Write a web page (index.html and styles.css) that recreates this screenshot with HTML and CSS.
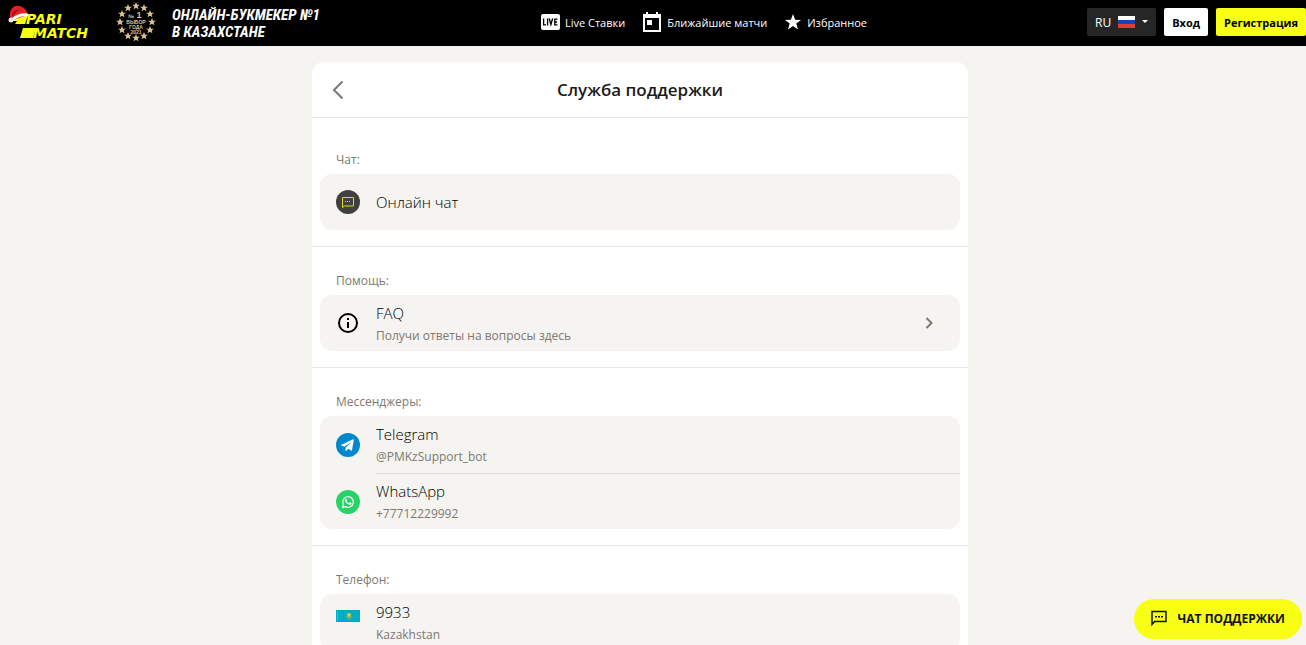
FILE: index.html
```html
<!DOCTYPE html>
<html lang="ru">
<head>
<meta charset="utf-8">
<meta name="viewport" content="width=device-width, initial-scale=1">
<title>Служба поддержки</title>
<link rel="stylesheet" href="styles.css">
</head>
<body>
<div class="page">
  <header class="topbar">
    <div class="brand">
      <a class="logo" href="#" aria-label="Parimatch">
        <svg class="logo-svg" width="82" height="34" viewBox="0 0 82 34">
          <path fill="#f8ff13" d="M5 10h15l-3 9H7l2-3H1z"/>
          <path fill="#f8ff13" d="M15 23h13l-3 10H12z"/>
          <text class="logo-text" x="18" y="19">PARI</text>
          <text class="logo-text" x="25" y="33">MATCH</text>
          <path fill="#e3212b" d="M2 13C1 5 5 0 11 1c5 1 8 4 9 9L5 15z"/>
          <path fill="#a90f1a" d="M4 9c2-4 5-5 8-4-4 1-6 4-7 9z"/>
          <path stroke="#fff" stroke-width="3" stroke-linecap="round" fill="none" d="M5 14c4-3 9-5 14-4"/>
          <circle cx="3" cy="15" r="2.500" fill="#e9e9e9"/>
        </svg>
      </a>
      <svg class="award" width="40" height="40" viewBox="0 0 40 40">
        <defs><path id="st" d="M0-4 1.100-1.300 3.900-1.200 1.700.6 2.400 3.300 0 1.800-2.400 3.300-1.700.6-3.900-1.200-1.100-1.300z"/></defs>
        <g fill="#dcc190">
          <use href="#st" x="20" y="4"/><use href="#st" x="28" y="6"/><use href="#st" x="34" y="12"/><use href="#st" x="36" y="20"/>
          <use href="#st" x="34" y="28"/><use href="#st" x="28" y="34"/><use href="#st" x="20" y="36"/><use href="#st" x="12" y="34"/>
          <use href="#st" x="6" y="28"/><use href="#st" x="4" y="20"/><use href="#st" x="6" y="12"/><use href="#st" x="12" y="6"/>
          <text class="aw aw-s" x="15" y="16">№</text>
          <text class="aw aw-l" x="23" y="16">1</text>
          <text class="aw aw-s" x="20" y="22">ВЫБОР</text>
          <text class="aw aw-s" x="20" y="27">ГОДА</text>
          <text class="aw aw-s" x="20" y="32">2021</text>
        </g>
      </svg>
      <p class="slogan">ОНЛАЙН-БУКМЕКЕР №1<br>В КАЗАХСТАНЕ</p>
    </div>
    <nav class="nav">
      <a class="nav-link" href="#">
        <svg width="20" height="16" viewBox="0 0 20 16"><rect x="1" width="19" height="16" rx="2" fill="#fff"/><path fill="none" stroke="#000" stroke-width="1.300" d="M3.600 4.500v6.300H6M7.600 4.500v7M9.200 4.500l1.700 6 1.700-6M17.500 5.100h-2.700v5.800h2.700M14.800 8h2.300"/></svg>
        Live Ставки</a>
      <a class="nav-link" href="#">
        <svg width="20" height="20" viewBox="0 0 20 20"><path fill="#fff" fill-rule="evenodd" d="M1 2h3V0h2v2h8V0h2v2h3v18H1zM3 6v12h14V6zM5 8h5v5H5z"/></svg>
        Ближайшие матчи</a>
      <a class="nav-link" href="#">
        <svg width="18" height="20" viewBox="0 0 18 20"><path fill="#fff" d="M9 2l2.100 5.700 5.900.2-4.700 3.700L14 17.500 9 14.100l-5 3.400 1.700-5.900L1 7.900l5.900-.2z"/></svg>
        Избранное</a>
    </nav>
    <div class="actions">
      <button class="btn btn-lang" type="button">RU
        <svg class="flag-ru" width="17" height="12" viewBox="0 0 17 12"><path fill="#fff" d="M0 0h17v4H0z"/><path fill="#1348b4" d="M0 4h17v4H0z"/><path fill="#e23b35" d="M0 8h17v4H0z"/></svg>
        <svg width="6" height="4" viewBox="0 0 6 4"><path fill="#fff" d="M0 0h6L3 3z"/></svg>
      </button>
      <button class="btn btn-login" type="button">Вход</button>
      <button class="btn btn-register" type="button">Регистрация</button>
    </div>
  </header>

  <main class="main">
    <div class="card">
      <div class="card-head">
        <button class="back" type="button" aria-label="Назад"><svg width="12" height="20" viewBox="0 0 12 20"><path d="M10.500 1.500 2 10l8.500 8.500" fill="none" stroke="#7d7870" stroke-width="2"/></svg></button>
        <h1 class="title">Служба поддержки</h1>
      </div>
      <section class="section section-first">
        <h2 class="label">Чат:</h2>
        <div class="group">
          <a class="row" href="#">
            <svg class="icon" viewBox="0 0 24 24"><circle cx="12" cy="12" r="12" fill="#404040"/><path fill="none" stroke="#d9e00f" d="M6.500 7.500h11v8.500H8.500l-2 1.500z"/><path stroke="#d9e00f" stroke-dasharray="1 1" d="M9 11.500h6"/></svg>
            <span class="text"><span class="name">Онлайн чат</span></span>
          </a>
        </div>
      </section>
      <section class="section">
        <h2 class="label">Помощь:</h2>
        <div class="group">
          <a class="row" href="#">
            <svg class="icon" viewBox="0 0 24 24"><circle cx="12" cy="12" r="9" fill="none" stroke="#000" stroke-width="2"/><path fill="#000" d="M11 7h2v2h-2zM11 11h2v6h-2z"/></svg>
            <span class="text"><span class="name">FAQ</span><span class="sub">Получи ответы на вопросы здесь</span></span>
            <svg class="chevron" width="8" height="12" viewBox="0 0 8 12"><path d="M1.500 1 6.500 6l-5 5" fill="none" stroke="#7d7870" stroke-width="2"/></svg>
          </a>
        </div>
      </section>
      <section class="section">
        <h2 class="label">Мессенджеры:</h2>
        <div class="group">
          <a class="row" href="#">
            <svg class="icon" viewBox="0 0 24 24"><circle cx="12" cy="12" r="12" fill="#0088cc"/><path fill="#fff" d="M17.800 6.700 16 17.200c-.1.500-.5.600-.9.400l-2.900-1.900-1.900 2.200c-.4.400-.7.200-.7-.3v-2.900l6.200-6-7.500 5-2.900-1.100c-.5-.2-.5-.6 0-.8l11.700-5.500c.5-.2.800 0 .7.400z"/></svg>
            <span class="text"><span class="name">Telegram</span><span class="sub">@PMKzSupport_bot</span></span>
          </a>
          <a class="row" href="#">
            <svg class="icon" viewBox="0 0 24 24"><circle cx="12" cy="12" r="12" fill="#25d366"/><path fill="none" stroke="#fff" stroke-width="1.200" d="M6.600 17.400l.8-2.900a5.300 5.300 0 1 1 2.100 2.100z"/><path fill="#fff" d="M9.700 8.900c.4-.3.800-.2 1 .2l.5 1.100c.1.300-.3.700-.5 1 .6 1 1.300 1.600 2.300 2l.7-.8c.2-.2.400-.2.600-.1l1.200.6c.3.200.2.700 0 1-.6.900-1.600 1-2.600.6-1.700-.6-2.900-1.700-3.700-3.200-.5-1-.3-1.900.5-2.400z"/></svg>
            <span class="text"><span class="name">WhatsApp</span><span class="sub">+77712229992</span></span>
          </a>
        </div>
      </section>
      <section class="section">
        <h2 class="label">Телефон:</h2>
        <div class="group">
          <a class="row" href="#">
            <svg class="icon icon-flag" viewBox="0 0 24 12"><path fill="#00abc8" d="M0 0h24v12H0z"/><path fill="#5eb97b" d="M1 1h1v10H1z"/><circle cx="13" cy="5" r="2" fill="#f1c21b"/><path fill="none" stroke="#8eb65a" d="M9.500 6c1 1.500 2.200 2 3.500 2s2.500-.5 3.500-2M11 9.500l2-1 2 1"/></svg>
            <span class="text"><span class="name">9933</span><span class="sub">Kazakhstan</span></span>
          </a>
        </div>
      </section>
    </div>
  </main>

  <button class="chat" type="button">
    <svg width="16" height="16" viewBox="0 0 16 16"><path fill="none" stroke="#111" stroke-width="1.500" d="M1 14.500V1.500h14v10H3.500z"/><path fill="#111" d="M4 6h2v1.500H4zM7 6h2v1.500H7zM10 6h2v1.500h-2z"/></svg>
    ЧАТ ПОДДЕРЖКИ</button>
</div>
</body>
</html>
```
FILE: styles.css
```css
* { box-sizing: border-box; }
body {
  margin: 0;
  background: #f5f4f0;
  color: #1c1b19;
  font-family: "Open Sans", "Noto Sans", sans-serif;
}
a { color: inherit; text-decoration: none; }
button { font: inherit; border: 0; padding: 0; cursor: pointer; }
svg { flex: none; display: block; }

.page { display: flex; flex-direction: column; height: 100vh; overflow: hidden; }

.topbar {
  flex: none;
  display: flex;
  align-items: center;
  justify-content: space-between;
  height: 46px;
  padding-bottom: 2px;
  background: #000;
  color: #fff;
  font-size: 11px;
}
.brand { display: flex; align-items: center; padding-left: 8px; }
.logo-svg { overflow: visible; }
.logo-text { font: italic 700 14px "DejaVu Sans", sans-serif; fill: #f8ff13; }
.award { margin: 0 16px 0 26px; }
.aw { font-family: "Liberation Sans", sans-serif; font-weight: 700; text-anchor: middle; }
.aw-s { font-size: 5px; }
.aw-l { font-size: 9px; }
.slogan {
  margin: 0;
  padding-top: 4px;
  font: italic 700 15px/17px "Roboto Condensed", "Roboto", sans-serif;
  white-space: nowrap;
}

.nav { display: flex; gap: 17px; }
.nav-link { display: flex; align-items: center; gap: 5px; white-space: nowrap; }

.actions { display: flex; gap: 8px; }
.btn { height: 28px; padding: 0 8px; border-radius: 2px; color: #000; font-weight: 700; white-space: nowrap; }
.btn-lang { display: flex; align-items: center; gap: 7px; background: #262626; color: #fff; font-size: 12px; font-weight: 400; }
.btn-login { background: #fff; }
.btn-register { background: #f8ff13; }

.main { flex: 1; min-height: 0; overflow-y: auto; scrollbar-width: none; padding: 16px 26px 16px 0; }
.card { max-width: 656px; margin: 0 auto; background: #fff; border-radius: 12px; }
.card-head {
  display: grid;
  grid-template-columns: 20px 1fr 20px;
  align-items: center;
  height: 56px;
  padding: 0 20px;
  border-bottom: 1px solid #e6e6e6;
}
.back { background: none; }
.title { margin: 0; font-size: 17px; font-weight: 600; text-align: center; }

.section { padding: 26px 8px 16px; border-bottom: 1px solid #e6e6e6; }
.section-first { padding-top: 34px; }
.section:last-child { border-bottom: 0; }
.label { margin: 0 0 6px; padding-left: 16px; font-size: 12px; line-height: 16px; font-weight: 400; color: #7d7870; }

.group { background: #f5f4f0; border-radius: 12px; }
.row { display: flex; align-items: center; padding-left: 16px; gap: 16px; }
.icon { width: 24px; height: 24px; }
.icon-flag { height: 12px; align-self: flex-start; margin-top: 16px; }
.text { flex: 1; display: flex; flex-direction: column; justify-content: center; min-height: 56px; }
.row:not(:last-child) .text { border-bottom: 1px solid #dcdbd8; min-height: 58px; }
.row:not(:first-child) .text { min-height: 55px; }
.name { font-size: 15px; line-height: 24px; font-weight: 300; color: #000; }
.sub { padding-top: 1px; font-size: 12px; line-height: 20px; color: #7d7870; }
.chevron { margin-right: 27px; }

.chat {
  position: absolute;
  right: 4px;
  bottom: 6px;
  display: flex;
  align-items: center;
  gap: 11px;
  height: 40px;
  padding: 0 17px 2px;
  border-radius: 20px;
  background: #f8ff13;
  color: #111;
  font-size: 12px;
  font-weight: 700;
}
```
